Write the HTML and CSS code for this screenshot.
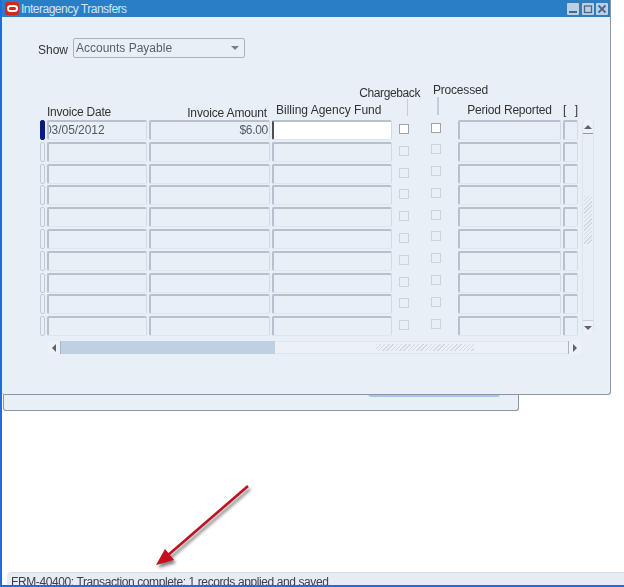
FILE: index.html
```html
<!DOCTYPE html>
<html lang="en">
<head>
<meta charset="utf-8">
<title>Interagency Transfers</title>
<link rel="stylesheet" href="styles.css">
</head>
<body>
<div class="desktop">
  <div class="window back-window"><div class="back-tab"></div></div>
  <div class="window front-window">
    <header class="titlebar">
      <span class="logo"><span class="logo-ring"></span></span>
      <span class="title">Interagency Transfers</span>
      <span class="controls">
        <svg class="ctl" viewBox="0 0 12 12"><rect width="12" height="12" rx="1" fill="#bcd0e4"/><rect x="2" y="8" width="8" height="2" fill="#4a6786"/></svg>
        <svg class="ctl" viewBox="0 0 12 12"><rect width="12" height="12" rx="1" fill="#bcd0e4"/><rect x="2.5" y="3" width="7" height="6.5" fill="none" stroke="#4a6786" stroke-width="1.3"/></svg>
        <svg class="ctl" viewBox="0 0 12 12"><rect width="12" height="12" rx="1" fill="#bcd0e4"/><path d="M2.5 2.5l7 7M9.5 2.5l-7 7" stroke="#4a6786" stroke-width="1.8"/></svg>
      </span>
    </header>
    <div class="content">
      <div class="show-row">
        <label class="show-label">Show</label>
        <div class="select"><span>Accounts Payable</span><i class="caret"></i></div>
      </div>
      <div class="heads">
        <span class="h h-date">Invoice Date</span>
        <span class="h h-amount">Invoice Amount</span>
        <span class="h h-fund">Billing Agency Fund</span>
        <span class="h h-charge">Chargeback<i class="tick"></i></span>
        <span class="h h-proc">Processed<i class="tick"></i></span>
        <span class="h h-period">Period Reported</span>
        <span class="h h-x">[ ]</span>
      </div>
      <div class="table-wrap">
        <div class="rows">
          <i class="ind on"></i><div class="f date"><span>03/05/2012</span></div><div class="f amount">$6.00</div><div class="f active"><b class="cursor"></b></div><div class="c"><i class="box lit"></i></div><div class="c up"><i class="box lit"></i></div><div class="f"></div><div class="f"></div>
          <i class="ind"></i><div class="f"></div><div class="f"></div><div class="f"></div><div class="c"><i class="box"></i></div><div class="c up"><i class="box"></i></div><div class="f"></div><div class="f"></div>
          <i class="ind"></i><div class="f"></div><div class="f"></div><div class="f"></div><div class="c"><i class="box"></i></div><div class="c up"><i class="box"></i></div><div class="f"></div><div class="f"></div>
          <i class="ind"></i><div class="f"></div><div class="f"></div><div class="f"></div><div class="c"><i class="box"></i></div><div class="c up"><i class="box"></i></div><div class="f"></div><div class="f"></div>
          <i class="ind"></i><div class="f"></div><div class="f"></div><div class="f"></div><div class="c"><i class="box"></i></div><div class="c up"><i class="box"></i></div><div class="f"></div><div class="f"></div>
          <i class="ind"></i><div class="f"></div><div class="f"></div><div class="f"></div><div class="c"><i class="box"></i></div><div class="c up"><i class="box"></i></div><div class="f"></div><div class="f"></div>
          <i class="ind"></i><div class="f"></div><div class="f"></div><div class="f"></div><div class="c"><i class="box"></i></div><div class="c up"><i class="box"></i></div><div class="f"></div><div class="f"></div>
          <i class="ind"></i><div class="f"></div><div class="f"></div><div class="f"></div><div class="c"><i class="box"></i></div><div class="c up"><i class="box"></i></div><div class="f"></div><div class="f"></div>
          <i class="ind"></i><div class="f"></div><div class="f"></div><div class="f"></div><div class="c"><i class="box"></i></div><div class="c up"><i class="box"></i></div><div class="f"></div><div class="f"></div>
          <i class="ind"></i><div class="f"></div><div class="f"></div><div class="f"></div><div class="c"><i class="box"></i></div><div class="c up"><i class="box"></i></div><div class="f"></div><div class="f"></div>
        </div>
        <div class="vscroll">
          <span class="vbtn vtop"><i class="tri-up"></i></span>
          <span class="vhatch"></span>
          <span class="vbtn vbot"><i class="tri-down"></i></span>
        </div>
      </div>
      <div class="hscroll">
        <span class="hbtn"><i class="tri-left"></i></span>
        <span class="hthumb"></span>
        <span class="htrack"><span class="hhatch"></span></span>
        <span class="hbtn hbtn-r"><i class="tri-right"></i></span>
      </div>
    </div>
  </div>
  <svg class="arrow" viewBox="0 0 110 100" width="110" height="100">
    <path class="shaft" d="M102 5L21 75"/>
    <path class="head" d="M10 84L19 68L28 79z"/>
  </svg>
  <div class="status">FRM-40400: Transaction complete: 1 records applied and saved</div>
  <div class="edge-left"></div>
  <div class="edge-bottom"></div>
</div>
</body>
</html>
```
FILE: styles.css
```css
html, body { margin: 0; padding: 0; background: #fff; }
.desktop {
  position: relative;
  width: 624px;
  height: 587px;
  overflow: hidden;
  font-family: "Liberation Sans", Arial, sans-serif;
  font-size: 12px;
  color: #3c4148;
  filter: blur(0.45px);
}
.edge-left { position: absolute; left: 0; top: 0; bottom: 0; width: 2px; background: #1c6ee0; }
.edge-bottom { position: absolute; left: 0; right: 0; bottom: 0; height: 2px; background: #1c6ee0; }
.window { position: absolute; box-sizing: border-box; background: #e9eff7; }
.back-window {
  left: 3px; top: 380px; width: 516px; height: 31px;
  border: 1px solid #8b97a6; border-top: 0; border-radius: 0 0 3px 3px;
}
.back-tab { position: absolute; left: 364px; top: 14px; width: 132px; height: 3px; background: #a9c6e6; border-radius: 0 0 4px 4px; }
.front-window {
  left: 2px; top: 0; width: 609px; height: 394.5px;
  border-right: 1px solid #8b97a6; border-bottom: 1px solid #8b97a6;
  border-radius: 0 0 3px 3px;
  display: flex; flex-direction: column;
}
.titlebar { height: 17px; flex: none; background: #2a7fc4; display: flex; align-items: center; }
.logo { width: 14px; height: 13px; margin-left: 3px; background: #d7261c; border-radius: 2px; display: flex; align-items: center; justify-content: center; }
.logo-ring { width: 11px; height: 7px; box-sizing: border-box; border: 2px solid #fff; border-radius: 3.5px; }
.title { margin-left: 2px; color: #d5e3f0; font-size: 12px; letter-spacing: -.5px; }
.controls { margin-left: auto; margin-right: 2px; display: flex; gap: 2.5px; }
.ctl { width: 12px; height: 12px; display: block; }
.content { flex: 1; padding: 21px 0 0 38px; }
.show-row { display: flex; align-items: center; height: 20px; }
.show-label { width: 35px; margin-left: -2px; padding-top: 3px; color: #333; }
.select {
  box-sizing: border-box; width: 172px; height: 20px;
  border: 1px solid #aab3bf; border-radius: 2px;
  display: flex; align-items: center; justify-content: space-between;
  padding: 0 5px 0 2px; color: #5b6068; letter-spacing: 0;
}
.caret { width: 0; height: 0; border: 4px solid transparent; border-top: 4px solid #7a808a; border-bottom: 0; }
.heads {
  display: grid; height: 62px; color: #333; font-size: 12px;
  grid-template-columns: 5px 100px 121px 120px 20px 40px 103px 15px;
  column-gap: 2px; align-items: end;
}
.h { grid-row: 1; white-space: nowrap; position: relative; }
.h-date { grid-column: 2; margin-bottom: 1px; letter-spacing: -.23px; }
.h-amount { grid-column: 3; justify-self: end; margin-right: 3px; margin-bottom: 0; letter-spacing: -.16px; }
.h-fund { grid-column: 4; margin-left: 4px; margin-bottom: 3px; }
.h-charge { grid-column: 5; justify-self: end; margin-right: -6px; margin-bottom: 20px; letter-spacing: -.4px; }
.h-proc { grid-column: 6; margin-left: 17px; margin-bottom: 23px; letter-spacing: -.2px; }
.h-period { grid-column: 7; justify-self: center; margin-bottom: 3px; letter-spacing: -.19px; }
.h-x { grid-column: 8; margin-bottom: 3px; letter-spacing: 2.5px; }
.tick { position: absolute; top: 100%; width: 1.5px; height: 17px; background: #c2cedb; margin-top: -1px; }
.h-charge .tick { right: 12px; }
.h-proc .tick { left: 4px; margin-top: 0; height: 18px; }
.table-wrap { display: flex; }
.rows {
  display: grid;
  grid-template-columns: 5px 100px 121px 120px 20px 40px 103px 15px;
  grid-auto-rows: 20px; row-gap: 1.8px; column-gap: 2px;
}
.ind { display: block; box-sizing: border-box; border: 1px solid #c3cad5; border-radius: 2px; }
.ind.on { background: #0a1a80; border-color: #0a1a80; }
.f {
  box-sizing: border-box;
  border-style: solid; border-width: 2px 1px 1px 2px;
  border-color: #b8c0cc #d3dae4 #dfe5ed #b8c0cc;
  border-radius: 2px; overflow: hidden; line-height: 17px;
  color: #555a62; white-space: nowrap;
}
.date span { display: block; margin-left: -4px; letter-spacing: -.05px; }
.amount { text-align: right; padding-right: 1px; letter-spacing: -.3px; }
.active { background: #fff; border-left-color: #4a5058; }
.c { display: flex; align-items: center; justify-content: center; padding-bottom: 2px; }
.c.up { padding-bottom: 5px; }
.box { display: block; width: 10px; height: 10px; box-sizing: border-box; border: 1px solid #ccd3dd; }
.box.lit { background: #fff; border-color: #9aa4b1; }
.vscroll {
  box-sizing: border-box; width: 12px; height: 213px; margin-left: 4px;
  border: 1px solid #dfe5ed; border-top: 0; border-radius: 4px;
  display: flex; flex-direction: column; justify-content: space-between; align-items: stretch;
}
.vbtn { height: 13px; display: flex; align-items: center; justify-content: center; flex: none; background: #eef2f8; }
.vtop { border-bottom: 1px solid #8f9aa8; border-radius: 5px 5px 0 0; }
.vbot { border-top: 1px solid #c7d0db; border-radius: 0 0 5px 5px; }
.tri-up { width: 0; height: 0; border: 4px solid transparent; border-bottom: 4px solid #5d636b; border-top: 0; }
.tri-down { width: 0; height: 0; border: 4px solid transparent; border-top: 4px solid #5d636b; border-bottom: 0; }
.tri-left { width: 0; height: 0; border: 4px solid transparent; border-right: 4px solid #5d636b; border-left: 0; }
.tri-right { width: 0; height: 0; border: 4px solid transparent; border-left: 4px solid #5d636b; border-right: 0; }
.vhatch {
  width: 8px; height: 48px; margin: 62px auto 76px 1px; flex: none;
  background: repeating-linear-gradient(135deg, #d2d9e3 0 1px, transparent 1px 3px);
}
.hscroll {
  display: flex; align-items: stretch; height: 13px; width: 533px;
  margin: 5px 0 0 8px; background: #e4eaf2;
}
.hbtn { width: 13px; display: flex; align-items: center; justify-content: center; border-right: 1px solid #aab4c0; background: #eef2f8; flex: none; box-sizing: border-box; }
.hbtn-r { border-right: 0; border-left: 1px solid #aab4c0; }
.hthumb { width: 214px; background: #bfd0e3; flex: none; }
.htrack { flex: 1; display: flex; align-items: center; justify-content: center; padding-left: 6px; border: 1px solid #dfe5ed; border-width: 1px 0; background: #ecf0f7; }
.hhatch { width: 98px; height: 7px; background: repeating-linear-gradient(135deg, #d2d9e3 0 1px, transparent 1px 3px); }
.arrow { position: absolute; left: 146px; top: 481px; filter: drop-shadow(2px 3px 1.5px rgba(50,50,50,.6)); }
.shaft { fill: none; stroke: #bd1320; stroke-width: 2.6; }
.head { fill: #c40f1c; }
.status {
  position: absolute; left: 7px; right: 0; top: 572px; height: 13px;
  background: #e6ecf4; border-top: 1px solid #d4dbe5; border-radius: 5px 0 0 0;
  padding-left: 4px; overflow: hidden; box-sizing: border-box; line-height: 18px; color: #3c4148;
  letter-spacing: -.4px;
}
```
